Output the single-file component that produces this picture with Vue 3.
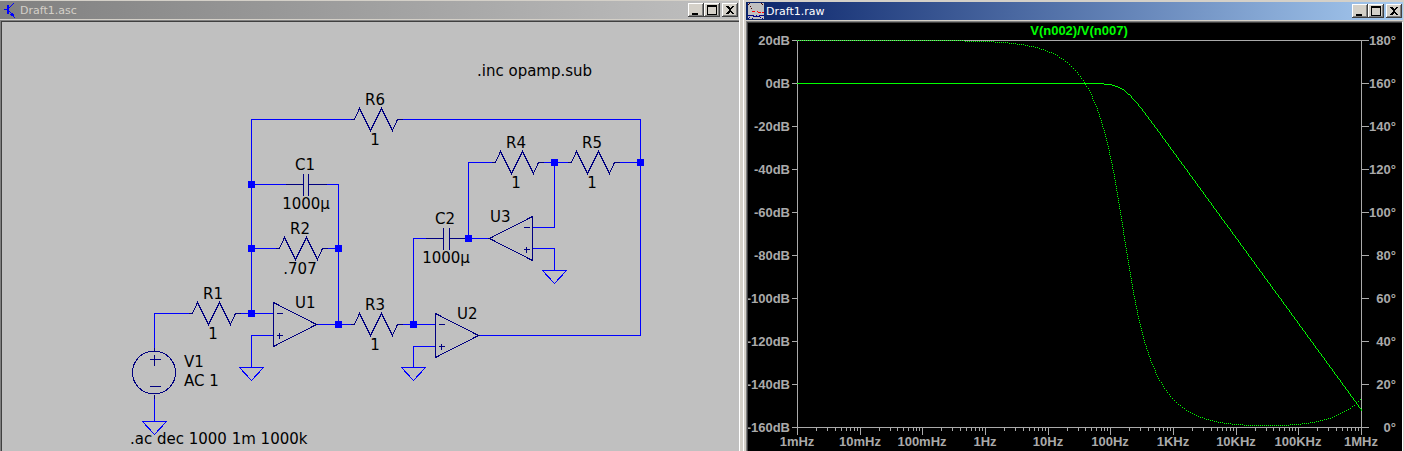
<script setup>
const resistors = [
  { name: 'R1', x: 192, y: 313, value: '1' },
  { name: 'R2', x: 279, y: 248, value: '.707' },
  { name: 'R3', x: 354, y: 324, value: '1' },
  { name: 'R4', x: 495, y: 162, value: '1' },
  { name: 'R5', x: 571, y: 162, value: '1' },
  { name: 'R6', x: 354, y: 119, value: '1' },
]
const capacitors = [
  { name: 'C1', x: 303, y: 184, gap: 5 },
  { name: 'C2', x: 443, y: 238, gap: 6 },
]
const amps = [
  { name: 'U1', x: 273, y: 324, dir: 1, lx: 295, ly: 308 },
  { name: 'U2', x: 435, y: 335, dir: 1, lx: 457, ly: 319 },
  { name: 'U3', x: 532, y: 238, dir: -1, lx: 490, ly: 222 },
]
const grounds = [[154, 421], [251, 367], [413, 367], [554, 270]]
const nodes = [[251, 184], [251, 248], [251, 313], [338, 248], [338, 324], [413, 324], [468, 238], [554, 162], [640, 162]]
const wires = [
  'M350 119H251V313H273', 'M402 119H640V335H479',
  'M251 184H285M326 184H338V324', 'M251 248H275M326 248H338',
  'M188 313H154V347M154 398V421', 'M240 313H251', 'M273 335H251V367',
  'M316 324H350M401 324H435', 'M435 346H413V367', 'M413 324V238H425',
  'M468 238H490M468 238V162H491', 'M542 162H567M618 162H640',
  'M532 227H554V162', 'M532 248H554V270',
].join('')

const axis = { left: 797, right: 1361, top: 40, bottom: 427 }
const rows = Array.from({ length: 10 }, (_, i) => ({ y: axis.top + 43 * i, db: 20 - 20 * i + 'dB', deg: 180 - 20 * i + '°' }))
const decade = (axis.right - axis.left) / 9
const cols = ['1mHz', '10mHz', '100mHz', '1Hz', '10Hz', '100Hz', '1KHz', '10KHz', '100KHz', '1MHz']
  .map((label, i) => ({ label, x: Math.round(axis.left + decade * i) }))
const minor = []
for (let d = 0; d < 9; d++) {
  for (let k = 2; k < 10; k++) minor.push(Math.round(axis.left + decade * (d + Math.log10(k))))
}
const ticks = rows.map(r => `M791 ${r.y}H797M1361 ${r.y}H1368`).join('')
  + cols.map(c => `M${c.x} 427V434`).join('') + minor.map(x => `M${x} 427V430`).join('')

// Second-order Butterworth response, cut-off 1/(2*pi*1 mF*1 ohm)
const cutoff = 1000 / (2 * Math.PI)
const freq = x => 10 ** ((x - axis.left) / decade - 3)
const gainY = x => 83 + 21.5 * Math.log10(1 + (freq(x) / cutoff) ** 4)
const phaseY = x => {
  const w = freq(x) / cutoff
  const lag = Math.atan2(Math.SQRT2 * w, 1 - w * w) - Math.atan(freq(x) / 4.2e6)
  return axis.top + (lag * 180 / Math.PI) * 43 / 20
}
function trace(fn, step) {
  let path = ''
  let n = 0
  let prev = Math.round(fn(axis.left))
  for (let x = axis.left; x <= axis.right; x++) {
    const end = Math.round(fn(x))
    const count = Math.max(1, Math.abs(end - prev))
    for (let i = 1; i <= count; i++) {
      const y = end === prev ? end : prev + Math.sign(end - prev) * i
      if (n++ % step === 0) path += `M${x} ${y}h1v1h-1z`
    }
    prev = end
  }
  return path
}
const gain = trace(gainY, 1)
const phase = trace(phaseY, 2)
</script>

<template>
  <main class="desktop">
    <section class="window schematic" aria-label="Draft1.asc">
      <header class="titlebar inactive">
        <svg class="icon" viewBox="0 0 16 16" width="16" height="16" aria-hidden="true">
          <path d="M5 3h2v9H5zM2 7h3v1H2zM7 5h1v1H7zM8 4h1v1H8zM9 3h1v1H9zM10 2h1v1h-1zM11 1h1v1h-1zM7 9h1v1H7zM8 10h1v1H8zM9 11h1v1H9zM10 11h1v1h1v1h-4v-1h1v-1h1zM9 13h3v1H9zM11 14h1v1h-1zM12 15h1v1h-1z" fill="#00f" />
        </svg>
        <h1>Draft1.asc</h1>
        <div class="controls">
          <button type="button" aria-label="Minimize"><svg viewBox="0 0 16 14"><path d="M4 10h6v2H4z" /></svg></button>
          <button type="button" aria-label="Maximize"><svg viewBox="0 0 16 14"><path fill-rule="evenodd" d="M3 2h10v10H3zM4 4v7h8V4z" /></svg></button>
          <button type="button" class="close" aria-label="Close"><svg viewBox="0 0 16 14"><path d="M4 3h2l2 2 2-2h2L9 7l3 4h-2L8 9l-2 2H4l3-4z" /></svg></button>
        </div>
      </header>
      <div class="pane">
        <svg class="canvas" viewBox="2 22 737 429" role="img" aria-label="Filter schematic">
          <g class="lines" transform="translate(.5 .5)">
            <path class="wire" :d="wires" />
            <path v-for="g in grounds" :key="g[0]" class="wire" :d="`M${g[0] - 12} ${g[1]}h24l-12 13z`" />
            <path v-for="r in resistors" :key="r.name" class="part" :d="`M${r.x - 4} ${r.y}h4l5 -11l11 22l11 -22l11 22l5 -11h5`" />
            <path v-for="c in capacitors" :key="c.name" class="part" :d="`M${c.x - 18} ${c.y}h18m0 -11v22m${c.gap} 0v-22m0 11h18`" />
            <path
              v-for="u in amps" :key="u.name" class="part"
              :d="`M${u.x} ${u.y - 22}v44L${u.x + 43 * u.dir} ${u.y}zM${u.x + 3 * u.dir} ${u.y - 11}h${6 * u.dir}m0 22h${-6 * u.dir}m${3 * u.dir} -3v6`"
            />
            <circle class="part" cx="153.5" cy="372" r="21.5" />
            <path class="part" d="M154 347V351M154 394V398M149 359H160M154 354V365M149 386H160" />
          </g>
          <rect v-for="(n, i) in nodes" :key="i" class="node" :x="n[0] - 3" :y="n[1] - 3" width="7" height="7" />
          <g class="labels">
            <g v-for="r in resistors" :key="r.name" class="mid">
              <text :x="r.x + 21" :y="r.y - 14">{{ r.name }}</text>
              <text :x="r.x + 21" :y="r.y + 26">{{ r.value }}</text>
            </g>
            <g v-for="c in capacitors" :key="c.name" class="mid">
              <text :x="c.x + 2" :y="c.y - 14">{{ c.name }}</text>
              <text :x="c.x + 3" :y="c.y + 25">1000µ</text>
            </g>
            <text v-for="u in amps" :key="u.name" :x="u.lx" :y="u.ly">{{ u.name }}</text>
            <text x="184" y="367">V1</text>
            <text x="184" y="386">AC 1</text>
            <text x="130" y="444">.ac dec 1000 1m 1000k</text>
            <text x="477" y="76">.inc opamp.sub</text>
          </g>
        </svg>
      </div>
    </section>

    <section class="window plot" aria-label="Draft1.raw">
      <header class="titlebar active">
        <svg class="icon" viewBox="0 0 16 16" width="16" height="16" aria-hidden="true">
          <path fill="#c0c0c0" d="M0 0h16v16H0z" />
          <path fill="#400" d="M0 1h1v1H0zM1 0h1v1H1zM2 3h1v1H2zM3 5h1v1H3zM13 0h1v1h-1zM14 1h1v1h-1z" />
          <path fill="#f00" d="M4 8h3v1H4zM9 8h1v1H9zM10 9h3v1h-3zM14 9h2v1h-2z" />
          <path fill="#008" d="M0 12h6v1h2v-1h1v1h2v-1h5v1h-4v1H5v-1H0zM1 14h1v1H1zM0 15h1v1H0zM4 15h1v1H4zM12 14h1v1h-1zM14 15h1v1h-1z" />
        </svg>
        <h1>Draft1.raw</h1>
        <div class="controls">
          <button type="button" aria-label="Minimize"><svg viewBox="0 0 16 14"><path d="M4 10h6v2H4z" /></svg></button>
          <button type="button" aria-label="Maximize"><svg viewBox="0 0 16 14"><path fill-rule="evenodd" d="M3 2h10v10H3zM4 4v7h8V4z" /></svg></button>
          <button type="button" class="close" aria-label="Close"><svg viewBox="0 0 16 14"><path d="M4 3h2l2 2 2-2h2L9 7l3 4h-2L8 9l-2 2H4l3-4z" /></svg></button>
        </div>
      </header>
      <div class="pane">
        <svg class="canvas" viewBox="748 23 654 428" role="img" aria-label="Frequency response">
          <path class="axis" transform="translate(.5 .5)" :d="`M797 40H1361V427H797z${ticks}`" />
          <path class="trace" :d="gain" />
          <path class="trace" :d="phase" />
          <g class="scale">
            <g v-for="r in rows" :key="r.y" class="end">
              <text x="790" :y="r.y + 5">{{ r.db }}</text>
              <text x="1396" :y="r.y + 5">{{ r.deg }}</text>
            </g>
            <text v-for="c in cols" :key="c.label" class="mid" :x="c.x" y="446">{{ c.label }}</text>
            <text class="mid signal" x="1079" y="35">V(n002)/V(n007)</text>
          </g>
        </svg>
      </div>
    </section>
  </main>
</template>

<style>
body {
  margin: 0;
  background: #d4d0c8;
}
</style>

<style scoped>
.desktop {
  display: grid;
  grid-template-columns: 740fr 661fr;
  gap: 3px;
  min-height: 100vh;
  overflow: hidden;
  background: #d4d0c8;
}
.window {
  display: flex;
  flex-direction: column;
  min-width: 0;
  box-sizing: border-box;
}
.schematic {
  padding-top: 1px;
  border-right: 1px solid #fff;
}
.plot {
  padding: 2px 1px 0 2px;
  border-left: 1px solid #fff;
}
.titlebar {
  display: flex;
  align-items: center;
  height: 18px;
  padding: 0 1px 0 2px;
  border-bottom: 1px solid #d4d0c8;
}
.inactive {
  color: #d4d0c8;
  background: linear-gradient(90deg, #808080, #c0c0c0);
}
.active {
  color: #fff;
  background: linear-gradient(90deg, #0a246a, #a6caf0);
}
.icon {
  flex: none;
  shape-rendering: crispEdges;
}
h1 {
  flex: 1;
  margin: 0;
  padding: 2px 0 0 2px;
  font: 400 11px/18px "DejaVu Sans", sans-serif;
}
.controls {
  display: flex;
}
button {
  width: 16px;
  height: 14px;
  padding: 0;
  border: 0;
  background: #d4d0c8;
  box-shadow: inset -1px -1px #404040, inset 1px 1px #fff, inset -2px -2px #808080;
}
button svg {
  display: block;
  width: 16px;
  height: 14px;
  shape-rendering: crispEdges;
}
.close {
  margin-left: 2px;
}
.pane {
  flex: 1;
  border-top: 1px solid #808080;
  border-left: 1px solid #808080;
  box-shadow: inset 1px 1px #404040;
  padding: 1px 0 0 1px;
}
.schematic .pane {
  background: #c0c0c0;
}
.plot .pane {
  background: #000;
  border-right: 1px solid #fff;
}
.canvas {
  display: block;
  width: 100%;
  height: auto;
}
.wire,
.part,
.axis {
  fill: none;
  stroke-width: 1px;
  shape-rendering: crispEdges;
}
.wire {
  stroke: #00f;
}
.part {
  stroke: #000080;
}
.node {
  fill: #00f;
}
.axis {
  stroke: #aaa;
}
.trace {
  fill: #0f0;
  shape-rendering: crispEdges;
}
.labels {
  font: 15px "DejaVu Sans", sans-serif;
  fill: #000;
}
.scale {
  font: 700 13px "Liberation Sans", sans-serif;
  fill: #aaa;
}
.mid {
  text-anchor: middle;
}
.end {
  text-anchor: end;
}
.signal {
  fill: #0f0;
}
</style>
